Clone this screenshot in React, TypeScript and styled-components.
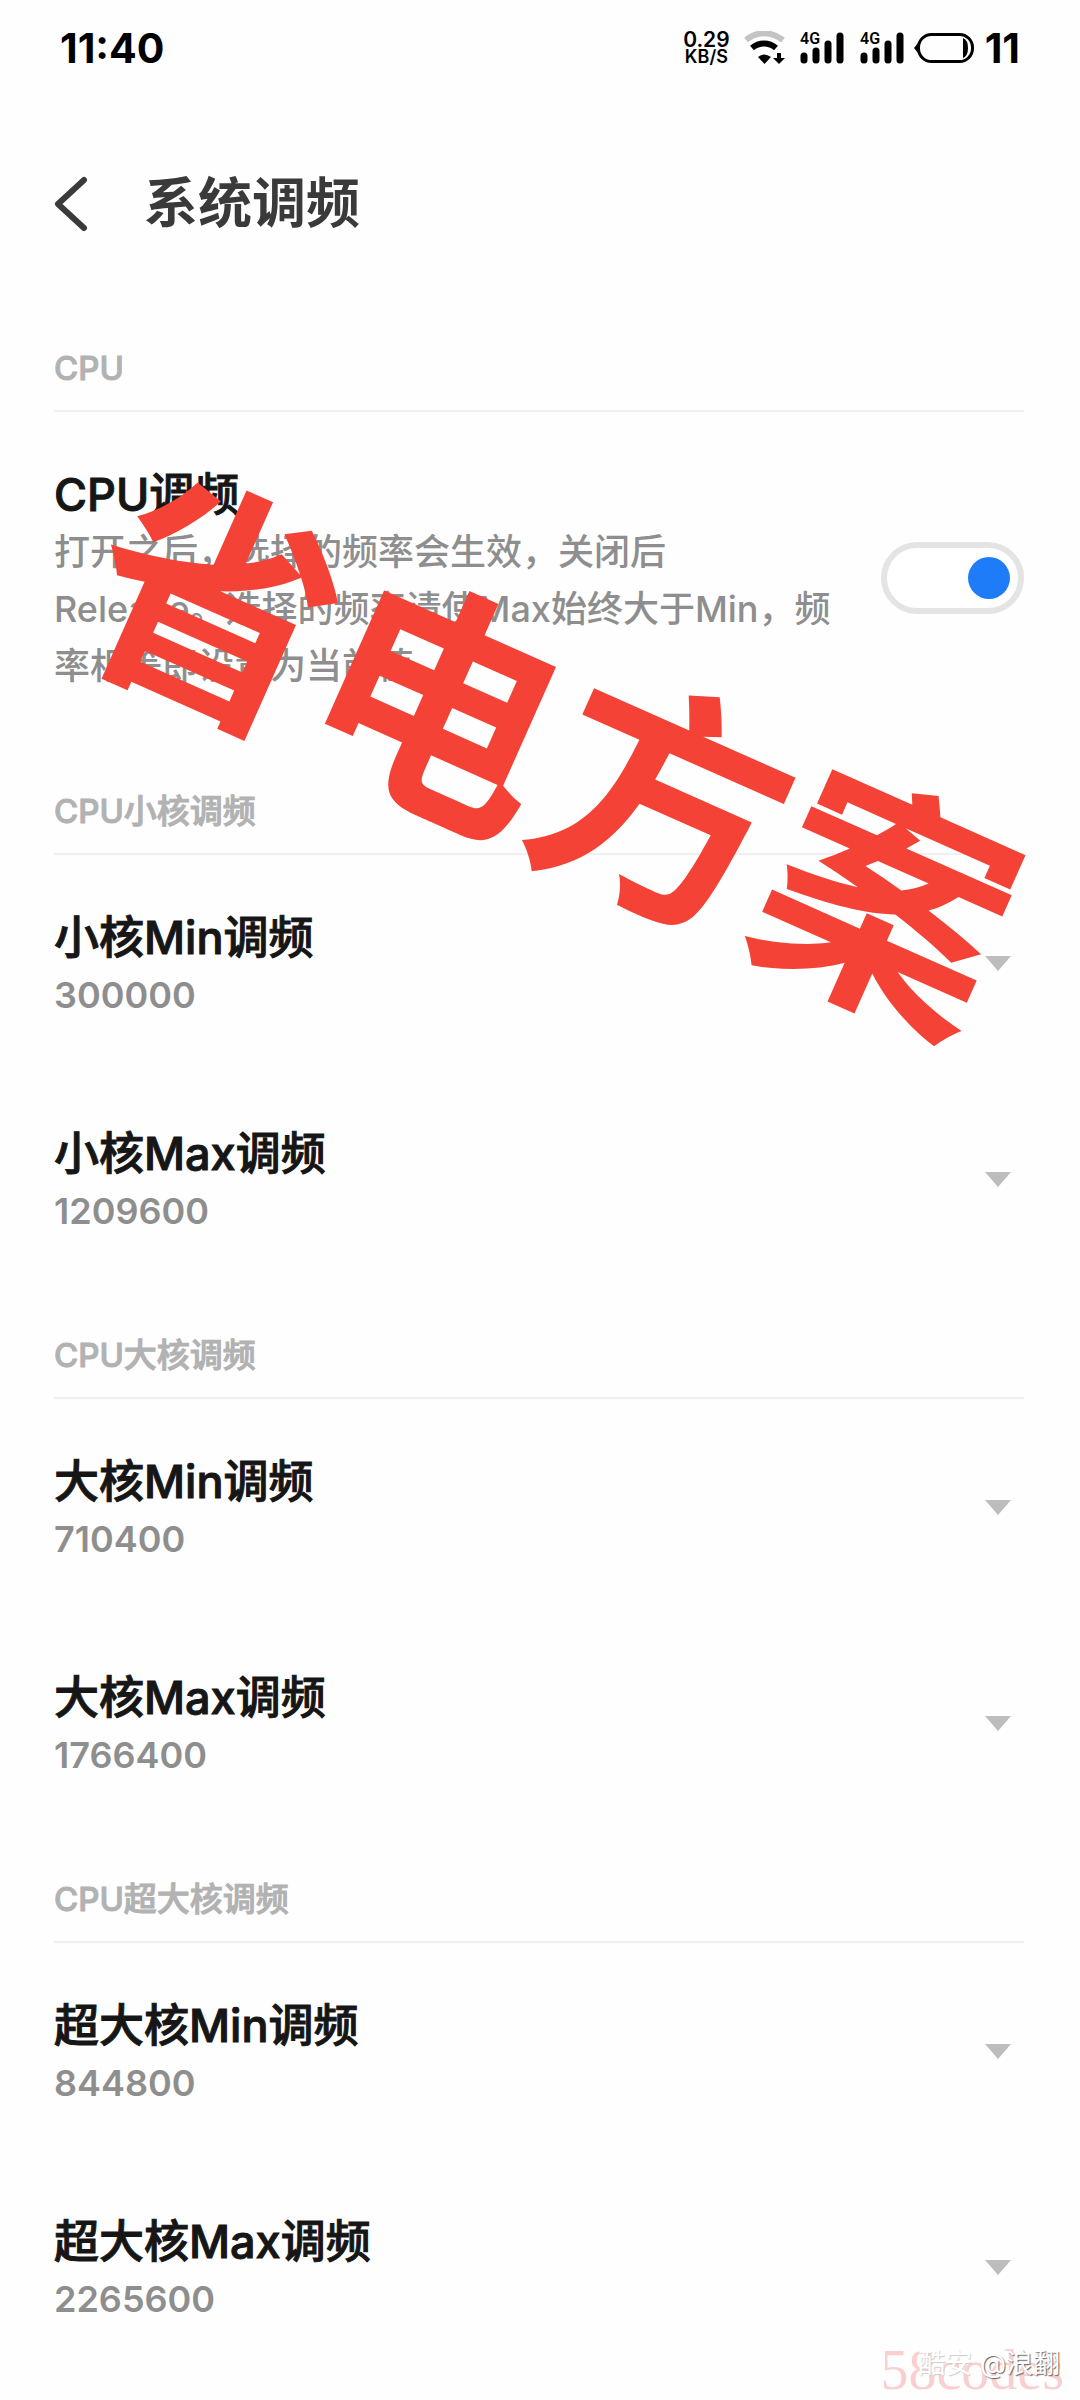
import React, { useId, useState } from "react";
import styled, { createGlobalStyle } from "styled-components";

const GlobalStyle = createGlobalStyle`
  *, *::before, *::after { box-sizing: border-box; }
  body {
    margin: 0;
    background: #fefefe;
    font-family: Inter, "Noto Sans CJK SC", sans-serif;
  }
  h1, h2, p { margin: 0; }
`;

const Page = styled.div`
  position: relative;
  min-height: 100vh;
  overflow: hidden;
`;

const StatusBar = styled.header`
  display: flex;
  align-items: center;
  justify-content: space-between;
  height: 96px;
  padding: 0 60px;
  color: #000;
`;

const StatusText = styled.span`
  font-size: 41px;
  font-weight: 700;
  line-height: 48px;
`;

const StatusIcons = styled.div`
  display: flex;
  align-items: center;
  gap: 14px;
`;

const Battery = styled.div`
  display: flex;
  align-items: center;
  gap: 10px;
  margin-left: -6px;
`;

const NetSpeed = styled.div`
  display: flex;
  flex-direction: column;
  align-items: center;
  font-weight: 600;
  font-size: 18px;
  line-height: 17px;
`;

const SpeedValue = styled.span`
  font-size: 21px;
`;

const TitleBar = styled.div`
  display: flex;
  align-items: center;
  gap: 56px;
  height: 216px;
  padding: 0 54px;
`;

const BackButton = styled.button`
  display: flex;
  padding: 0;
  border: 0;
  background: none;
`;

const PageTitle = styled.h1`
  font-size: 54px;
  line-height: 72px;
  font-weight: 700;
  color: #3a3a3a;
`;

const Content = styled.main`
  padding: 0 56px 0 54px;
  margin-top: -12px;
`;

const SectionTitle = styled.h2`
  padding: 44px 0 18px;
  border-bottom: 2px solid #f0f0f0;
  font-size: 33px;
  line-height: 48px;
  font-weight: 500;
  color: #b2b2b2;
  -webkit-text-stroke: 1px currentColor;
`;

const Item = styled.div`
  display: flex;
  align-items: center;
  justify-content: space-between;
  gap: 46px;
  padding: 54px 0 48px;
`;

const ItemBody = styled.div`
  flex: 1;
  min-width: 0;
`;

const ItemTitle = styled.label`
  display: block;
  font-size: 45px;
  line-height: 58px;
  font-weight: 500;
  color: #161616;
  -webkit-text-stroke: 1px currentColor;
`;

const Description = styled.p`
  font-size: 36px;
  line-height: 57px;
  font-weight: 500;
  color: #8e8e8e;
`;

const ValueSelect = styled.select`
  display: block;
  width: 100%;
  height: 56px;
  padding: 0;
  border: 0;
  appearance: none;
  background: none;
  font: 600 36px/56px Inter, "Noto Sans CJK SC", sans-serif;
  color: #8e8e8e;
`;

/* The whole row is centred on the item box, not on its text block. */
const ItemSide = styled.div`
  display: flex;
  align-items: center;
  align-self: stretch;
  flex: none;
  margin: -54px 0 -48px;
`;

const Arrow = styled.svg`
  margin-right: 13px;
`;

const Switch = styled.input`
  display: flex;
  align-items: center;
  width: 143px;
  height: 72px;
  margin: 0;
  padding: 0 8px;
  appearance: none;
  border: 6px solid #e4e4e4;
  border-radius: 36px;
  background: #fff;

  &::before {
    content: "";
    width: 42px;
    height: 42px;
    border-radius: 50%;
    background: #a0a0a0;
  }
  &:checked {
    justify-content: flex-end;
  }
  &:checked::before {
    background: #1f7cf8;
  }
`;

const Stamp = styled.div`
  position: absolute;
  top: 740px;
  left: 557px;
  transform: translate(-50%, -50%) rotate(24deg);
  font-family: "Noto Sans CJK SC", sans-serif;
  font-size: 246px;
  line-height: 1;
  font-weight: 700;
  white-space: nowrap;
  color: #f44336;
  pointer-events: none;
`;

const SiteMark = styled.div`
  position: absolute;
  right: 16px;
  bottom: 0;
  font-family: "Liberation Serif", serif;
  font-size: 56px;
  line-height: 60px;
  color: rgba(244, 120, 120, 0.35);
`;

const AuthorMark = styled.div`
  position: absolute;
  right: 20px;
  bottom: 16px;
  font-size: 27px;
  line-height: 40px;
  color: #fff;
  text-shadow: 1px 1px 1px #666;
`;

const MarkFaint = styled.span`
  text-shadow: 1px 1px 1px #ccc;
`;

const SignalSvg = styled.svg`
  overflow: visible;
`;

function WifiIcon() {
  return (
    <svg width="42" height="34" viewBox="0 0 42 34" fill="none" aria-hidden="true">
      <path d="M2 9C13 0 27 0 39 9" stroke="#c4c4c4" strokeWidth="6" />
      <path d="M8 17C15 11 25 11 32 17" stroke="#000" strokeWidth="6" />
      <path d="M14 26q6-5 13 0l-6.500 7z" fill="#000" />
      <path d="M35 22v8" stroke="#000" strokeWidth="4" />
      <path d="M29 27h12l-6 6z" fill="#000" />
    </svg>
  );
}

function SignalIcon() {
  return (
    <SignalSvg width="46" height="34" viewBox="0 0 46 34" aria-hidden="true">
      <text x="0" y="13" fontSize="16" fontWeight="600" fontFamily="Roboto, sans-serif">
        4G
      </text>
      <path d="M4 25v4M16 20v9M28 13v16M40 5v24" stroke="#000" strokeWidth="7" strokeLinecap="round" />
    </SignalSvg>
  );
}

function BatteryIcon() {
  return (
    <svg width="61" height="32" viewBox="0 0 61 32" fill="none" aria-hidden="true">
      <rect x="4.500" y="2.500" width="54" height="27" rx="13" stroke="#000" strokeWidth="3" />
      <path d="M4 11v10l-4-5z" fill="#000" />
      <path d="M49 6q5 2 5 10t-5 10z" fill="#000" />
    </svg>
  );
}

function FrequencyItem({ title, value }: { title: string; value: string }) {
  const id = useId();
  return (
    <Item>
      <ItemBody>
        <ItemTitle htmlFor={id}>{title}</ItemTitle>
        <ValueSelect id={id} defaultValue={value}>
          <option value={value}>{value}</option>
        </ValueSelect>
      </ItemBody>
      <ItemSide>
        <Arrow width="26" height="15" viewBox="0 0 26 15" aria-hidden="true">
          <path d="M0 0h26L13 15z" fill="#bdbdbd" />
        </Arrow>
      </ItemSide>
    </Item>
  );
}

const groups = [
  { name: "CPU小核调频", items: [["小核Min调频", "300000"], ["小核Max调频", "1209600"]] },
  { name: "CPU大核调频", items: [["大核Min调频", "710400"], ["大核Max调频", "1766400"]] },
  { name: "CPU超大核调频", items: [["超大核Min调频", "844800"], ["超大核Max调频", "2265600"]] },
];

export default function App() {
  const [enabled, setEnabled] = useState(true);
  return (
    <Page>
      <GlobalStyle />
      <StatusBar>
        <StatusText>11:40</StatusText>
        <StatusIcons>
          <NetSpeed>
            <SpeedValue>0.29</SpeedValue>
            <span>KB/S</span>
          </NetSpeed>
          <WifiIcon />
          <SignalIcon />
          <SignalIcon />
          <Battery>
            <BatteryIcon />
            <StatusText>11</StatusText>
          </Battery>
        </StatusIcons>
      </StatusBar>
      <TitleBar>
        <BackButton type="button" aria-label="返回">
          <svg width="34" height="56" viewBox="0 0 34 56" fill="none" aria-hidden="true">
            <path d="M30 4L4 28l26 24" stroke="#3a3a3a" strokeWidth="6" strokeLinecap="round" strokeLinejoin="round" />
          </svg>
        </BackButton>
        <PageTitle>系统调频</PageTitle>
      </TitleBar>
      <Content>
        <section>
          <SectionTitle>CPU</SectionTitle>
          <Item>
            <ItemBody>
              <ItemTitle htmlFor="cpu-switch">CPU调频</ItemTitle>
              <Description>
                打开之后，选择的频率会生效，关闭后Release。选择的频率请使Max始终大于Min，频率相等即设置为当前值
              </Description>
            </ItemBody>
            <ItemSide>
              <Switch
                id="cpu-switch"
                type="checkbox"
                role="switch"
                checked={enabled}
                onChange={(e) => setEnabled(e.target.checked)}
              />
            </ItemSide>
          </Item>
        </section>
        {groups.map((group) => (
          <section key={group.name}>
            <SectionTitle>{group.name}</SectionTitle>
            {group.items.map(([title, value]) => (
              <FrequencyItem key={title} title={title} value={value} />
            ))}
          </section>
        ))}
      </Content>
      <Stamp>省电方案</Stamp>
      <SiteMark>58codes</SiteMark>
      <AuthorMark>
        <MarkFaint>酷安</MarkFaint> @浪翻
      </AuthorMark>
    </Page>
  );
}
